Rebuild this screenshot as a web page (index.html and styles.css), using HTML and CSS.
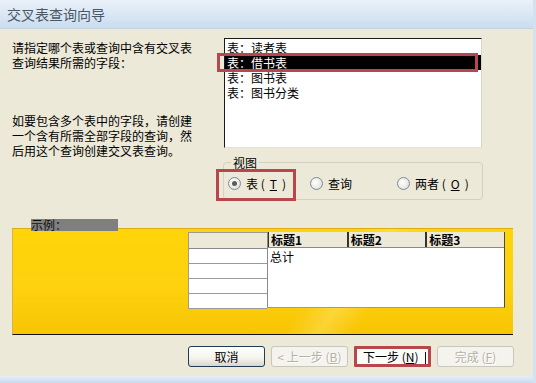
FILE: index.html
```html
<!DOCTYPE html>
<html>
<head>
    <title>交叉表查询向导</title>
    <link rel="stylesheet" href="styles.css">
</head>
<body>
    <div class="wizard">
        <div class="title-bar">交叉表查询向导</div>

        <div class="wizard-body">
            <div class="top-row">
                <div class="intro">
                    <p>请指定哪个表或查询中含有交叉表<br>查询结果所需的字段：</p>
                    <p class="intro-second">如要包含多个表中的字段，请创建<br>一个含有所需全部字段的查询，然<br>后用这个查询创建交叉表查询。</p>
                </div>

                <div class="side">
                    <div class="list-box">
                        <div class="list-item">表：读者表</div>
                        <div class="list-item selected">表：借书表</div>
                        <div class="list-item">表：图书表</div>
                        <div class="list-item">表：图书分类</div>
                    </div>

                    <fieldset class="view-group">
                        <legend>视图</legend>
                        <label class="radio-option first">
                            <span class="radio checked"></span>表 (<u>T</u>)
                        </label>
                        <label class="radio-option second">
                            <span class="radio"></span>查询
                        </label>
                        <label class="radio-option">
                            <span class="radio"></span>两者 (<u>O</u>)
                        </label>
                    </fieldset>
                </div>
            </div>

            <div class="sample-label">示例：</div>
            <div class="sample-panel">
                <div class="sample-table">
                    <div class="row-heads">
                        <div class="head-cell"></div>
                        <div class="row-cell"></div>
                        <div class="row-cell"></div>
                        <div class="row-cell"></div>
                        <div class="row-cell last"></div>
                    </div>
                    <div class="values">
                        <div class="col-heads">
                            <div class="col-head">标题1</div>
                            <div class="col-head">标题2</div>
                            <div class="col-head">标题3</div>
                        </div>
                        <div class="value-body">总计</div>
                    </div>
                </div>
            </div>

            <div class="button-row">
                <button class="wiz-button">取消</button>
                <button class="wiz-button disabled">&lt; 上一步 (<u>B</u>)</button>
                <button class="wiz-button marked">下一步 (<u>N</u>) <span class="ibeam"></span></button>
                <button class="wiz-button disabled">完成 (<u>F</u>)</button>
            </div>
        </div>

        <div class="bottom-frame"></div>

        <div class="mark mark-list"></div>
        <div class="mark mark-radio"></div>
    </div>
</body>
</html>
```

FILE: styles.css
```css
body {
    margin: 0;
    background: #ece9d8;
}

.wizard {
    position: relative;
    width: 536px;
    height: 383px;
    display: flex;
    flex-direction: column;
    background: #ece9d8;
    font-family: "Noto Sans CJK SC", "DejaVu Sans", sans-serif;
    font-size: 12px;
    color: #000;
    overflow: hidden;
    border-right: 3px solid #d3e1f1;
    box-sizing: border-box;
}

.title-bar {
    height: 29px;
    flex: none;
    display: flex;
    align-items: center;
    padding-left: 7px;
    margin-right: -3px;
    font-size: 14px;
    color: #4a5866;
    background: linear-gradient(180deg, #eaf1f9 0%, #d9e6f4 55%, #cbdcee 100%);
    border-bottom: 1px solid #c4d3e3;
    box-sizing: border-box;
}

.wizard-body {
    flex: 1;
    padding: 9px 0 0 12px;
}

.top-row {
    display: flex;
}

.intro {
    width: 211px;
    padding-top: 2px;
    line-height: 15px;
}

.intro p {
    margin: 0;
}

.intro .intro-second {
    margin-top: 43px;
}

.side {
    width: 260px;
}

.list-box {
    margin-left: 1px;
    width: 258px;
    height: 110px;
    padding-top: 1px;
    box-sizing: border-box;
    background: #fff;
    border: 1px solid;
    border-color: #1a1a1a #d8d6cc #e4e2d8 #1a1a1a;
    line-height: 15px;
}

.list-item {
    padding-left: 2px;
}

.list-item.selected {
    background: #000;
    color: #fff;
}

.view-group {
    margin: 7px 0 0 0;
    padding: 6px 0 0 4px;
    height: 45px;
    box-sizing: border-box;
    border: 1px solid #d4d1c0;
    border-radius: 4px;
    display: flex;
    align-items: center;
}

.view-group legend {
    padding: 0 2px;
    margin-left: 3px;
    line-height: 15px;
}

.radio-option {
    display: flex;
    align-items: center;
    gap: 5px;
    width: 82px;
    line-height: 15px;
    margin-top: -8px;
}

.radio-option.second {
    width: 87px;
}

.radio {
    width: 11px;
    height: 11px;
    border-radius: 50%;
    border: 1px solid #7d8b9d;
    background: radial-gradient(circle at 40% 40%, #ffffff 0%, #e9e8e2 60%, #d2d0c6 100%);
    position: relative;
    flex: none;
}

.radio.checked::after {
    content: "";
    position: absolute;
    left: 3px;
    top: 3px;
    width: 5px;
    height: 5px;
    border-radius: 50%;
    background: #5b5b5b;
}

u {
    text-decoration-thickness: 1px;
    text-underline-offset: 1px;
}

.sample-label {
    position: relative;
    z-index: 1;
    margin: 19px 0 0 19px;
    width: 87px;
    height: 12px;
    line-height: 12px;
    background: #7f7f7f;
    color: #111;
}

.sample-panel {
    margin-top: -3px;
    width: 501px;
    height: 107px;
    box-sizing: border-box;
    padding: 3px 0 0 175px;
    border-top: 1px solid #d9ad10;
    border-left: 1px solid #d9b53a;
    border-bottom: 1px solid #111;
    background:
        linear-gradient(125deg, transparent 60%, rgba(255, 236, 140, 0.35) 66%, transparent 72%),
        linear-gradient(180deg, #ffd408 0%, #fdd20f 55%, #f8c404 100%);
}

.sample-table {
    display: flex;
}

.row-heads {
    width: 79px;
    border: 1px solid #9b9b9b;
    border-right: none;
    box-sizing: border-box;
    background: #fff;
}

.head-cell {
    height: 15px;
    background: #ece9d8;
    border-bottom: 1px solid #8a8a8a;
}

.row-cell {
    height: 14px;
    border-bottom: 1px solid #9b9b9b;
}

.row-cell.last {
    border-bottom: none;
}

.values {
    width: 238px;
    height: 76px;
    background: #fff;
    border-left: 1px solid #8a8a8a;
    border-right: 1px solid #4a4a4a;
    border-bottom: 1px solid #9b9b9b;
    box-sizing: border-box;
}

.col-heads {
    display: flex;
    height: 16px;
    background: #ece9d8;
    border-bottom: 1px solid #8a8a8a;
    box-sizing: border-box;
}

.col-head {
    width: 79px;
    padding-left: 2px;
    box-sizing: border-box;
    border-left: 2px solid #333;
    font-weight: bold;
    line-height: 15px;
}

.col-head:first-child {
    border-left-width: 1px;
}

.value-body {
    padding-left: 2px;
    line-height: 17px;
}

.button-row {
    display: flex;
    gap: 6px;
    margin: 11px 0 0 176px;
}

.wiz-button {
    position: relative;
    width: 77px;
    height: 21px;
    padding: 0;
    font-family: "Noto Sans CJK SC", "DejaVu Sans", sans-serif;
    font-size: 12px;
    line-height: 15px;
    color: #000;
    border: 1px solid #1f3b56;
    border-radius: 3px;
    background: linear-gradient(180deg, #ffffff 0%, #f4f3ee 60%, #d9d6c8 100%);
}

.wiz-button.disabled {
    color: #b4b2a6;
    border-color: #c9c7ba;
    background: #f4f3ee;
    text-shadow: 1px 1px 0 #fff;
}

.wiz-button.marked {
    border: 3px solid #b8474d;
    border-radius: 1px;
    background: #fbfbf8;
    text-align: left;
    padding-left: 6px;
}

.ibeam {
    display: inline-block;
    width: 1px;
    height: 12px;
    margin-left: 4px;
    vertical-align: -2px;
    background: #111;
}

.bottom-frame {
    flex: none;
    height: 7px;
    margin-right: -3px;
    background: linear-gradient(180deg, #e6eef7 0%, #c8daee 100%);
}

.mark {
    position: absolute;
    border: 3px solid #b8474d;
    box-sizing: border-box;
}

.mark-list {
    left: 217px;
    top: 53px;
    width: 261px;
    height: 19px;
}

.mark-radio {
    left: 216px;
    top: 169px;
    width: 80px;
    height: 32px;
}
```
